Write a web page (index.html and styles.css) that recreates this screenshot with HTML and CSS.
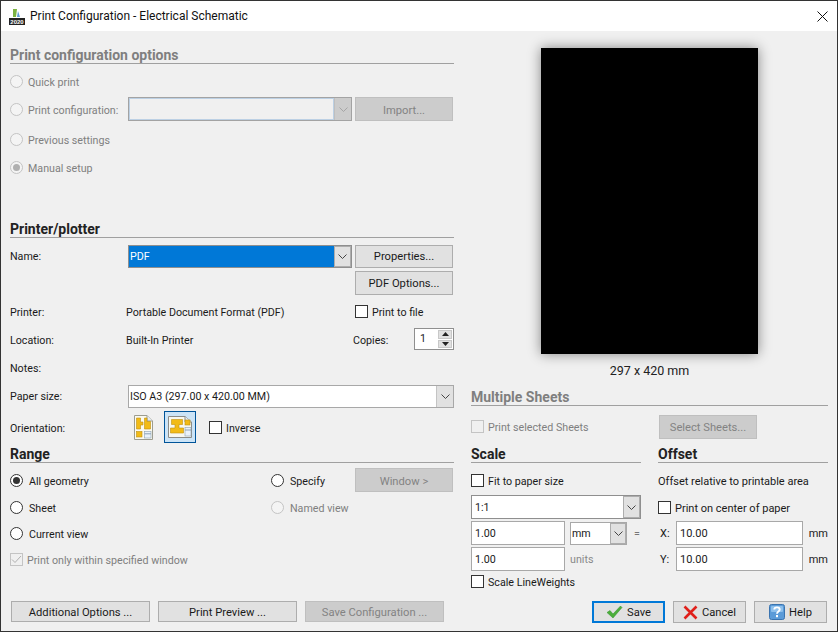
FILE: index.html
```html
<!DOCTYPE html>
<html lang="en">
<head>
<meta charset="utf-8">
<title>Print Configuration - Electrical Schematic</title>
<link rel="stylesheet" href="styles.css">
</head>
<body>
<div class="window">
  <header class="titlebar">
    <svg class="app-icon" width="16" height="18" viewBox="0 0 16 18">
      <path d="M4 1 L8 1 L7 9 L4 9 Z" fill="#7cb342"/>
      <path d="M9 3 L11 9 L8 9 Z" fill="#5b9bd5"/>
      <rect x="0" y="10" width="16" height="7" fill="#222"/>
      <text x="8" y="16" class="app-year" text-anchor="middle">2020</text>
    </svg>
    <span class="title">Print Configuration - Electrical Schematic</span>
    <svg class="close" width="11" height="11" viewBox="0 0 11 11"><path d="M0.5 0.5 L10.5 10.5 M10.5 0.5 L0.5 10.5" stroke="#111" stroke-width="1" fill="none"/></svg>
  </header>

  <main class="main">
    <div class="left">
      <h2 class="heading muted">Print configuration options</h2>
      <div class="opts">
        <div class="line"><span class="radio off"></span><span class="muted-text">Quick print</span></div>
        <div class="line config">
          <span class="radio off"></span><span class="muted-text cfg-label">Print configuration:</span>
          <div class="select dis cfg-select"><span class="val"></span><span class="arrow dis"><svg width="9" height="5" viewBox="0 0 9 5"><path d="M0.5 0.5 L4.5 4.5 L8.5 0.5" fill="none" stroke="#a5a5a5"/></svg></span></div>
          <button class="btn dis import">Import...</button>
        </div>
        <div class="line"><span class="radio off"></span><span class="muted-text">Previous settings</span></div>
        <div class="line"><span class="radio off on"></span><span class="muted-text">Manual setup</span></div>
      </div>

      <h2 class="heading plot">Printer/plotter</h2>
      <div class="printer">
        <span class="lbl">Name:</span>
        <div class="select strong name-select"><span class="val sel">PDF</span><span class="arrow strong"><svg width="9" height="5" viewBox="0 0 9 5"><path d="M0.5 0.5 L4.5 4.5 L8.5 0.5" fill="none" stroke="#444"/></svg></span></div>
        <button class="btn">Properties...</button>

        <button class="btn pdf">PDF Options...</button>

        <span class="lbl">Printer:</span>
        <span class="info">Portable Document Format (PDF)</span>
        <label class="line file"><span class="check"></span>Print to file</label>

        <span class="lbl">Location:</span>
        <span class="info">Built-In Printer</span>
        <div class="copies">
          <span>Copies:</span>
          <div class="spin"><span class="spin-val">1</span>
            <span class="spin-btns">
              <span class="spin-b"><svg width="7" height="4" viewBox="0 0 7 4"><path d="M3.5 0 L7 4 L0 4 Z" fill="#222"/></svg></span>
              <span class="spin-b"><svg width="7" height="4" viewBox="0 0 7 4"><path d="M0 0 L7 0 L3.5 4 Z" fill="#222"/></svg></span>
            </span>
          </div>
        </div>

        <span class="lbl notes">Notes:</span>

        <span class="lbl paper-l">Paper size:</span>
        <div class="select paper"><span class="val">ISO A3 (297.00 x 420.00 MM)</span><span class="arrow"><svg width="9" height="5" viewBox="0 0 9 5"><path d="M0.5 0.5 L4.5 4.5 L8.5 0.5" fill="none" stroke="#444"/></svg></span></div>

        <span class="lbl orient-l">Orientation:</span>
        <div class="orient">
          <span class="orient-btn">
            <svg width="19" height="25" viewBox="0 0 19 25">
              <path d="M0.5 0.5 H13 L18.5 6 V24.5 H0.5 Z" fill="#fbfaf0" stroke="#9c9c90"/>
              <path d="M13 0.5 V6 H18.5" fill="#e4ecf3" stroke="#9c9c90"/>
              <path d="M2.5 3 H6.5 V7 H9 V10 H6.5 V14 H2.5 Z" fill="#f2bb16" stroke="#c09010" stroke-width=".6"/>
              <path d="M10.5 3 H13 V6.5 H16.5 V14 H10.5 Z" fill="#f2bb16" stroke="#c09010" stroke-width=".6"/>
              <rect x="2.5" y="16.5" width="5.5" height="5.5" fill="#f2bb16" stroke="#c09010" stroke-width=".6"/>
              <rect x="10.5" y="16.5" width="6.5" height="6.5" fill="#eaf2fa" stroke="#8aa0b5" stroke-width=".6"/>
              <path d="M10.5 18.8 H17" stroke="#8aa0b5" stroke-width="1"/>
            </svg>
          </span>
          <span class="orient-btn selected">
            <svg width="24" height="22" viewBox="0 0 24 22">
              <path d="M0.5 0.5 H17 L23.5 6 V21.5 H0.5 Z" fill="#f8f8f0" stroke="#8c8c88"/>
              <path d="M17 0.5 V6 H23.5" fill="#e4ecf3" stroke="#8c8c88"/>
              <path d="M3.5 3.5 H14.5 V8.5 H11 V12 H15.5 V17 H2.5 V12 H7 V8.5 H3.5 Z" fill="#f2bb16" stroke="#c09010" stroke-width=".6"/>
              <rect x="17" y="4" width="5" height="5" fill="#f2bb16" stroke="#c09010" stroke-width=".6"/>
              <rect x="17" y="11.5" width="6" height="8.5" fill="#eaf2fa" stroke="#8aa0b5" stroke-width=".6"/>
              <path d="M17 14 H23" stroke="#8aa0b5" stroke-width="1"/>
            </svg>
          </span>
          <label class="line inverse"><span class="check"></span>Inverse</label>
        </div>
      </div>

      <h2 class="heading range-h">Range</h2>
      <div class="range">
        <label class="line"><span class="radio on-dark"></span>All geometry</label>
        <label class="line"><span class="radio"></span>Specify</label>
        <button class="btn dis">Window &gt;</button>

        <label class="line"><span class="radio"></span>Sheet</label>
        <span class="line muted-text"><span class="radio off"></span>Named view</span>
        <span></span>

        <label class="line"><span class="radio"></span>Current view</label>
        <span></span>
        <span></span>

        <span class="line muted-text within"><span class="check off checked"><svg width="11" height="9" viewBox="0 0 11 9"><path d="M1 4.5 L4 7.5 L10 1" fill="none" stroke="#b0b0b0" stroke-width="1"/></svg></span>Print only within specified window</span>
      </div>
    </div>

    <div class="right">
      <div class="preview">
        <div class="paper-sheet"></div>
        <span class="size">297 x 420 mm</span>
      </div>

      <h2 class="heading muted">Multiple Sheets</h2>
      <div class="sheets">
        <span class="line muted-text"><span class="check off"></span>Print selected Sheets</span>
        <button class="btn dis">Select Sheets...</button>
      </div>

      <div class="columns">
        <section class="scale">
          <h2 class="heading">Scale</h2>
          <label class="line fit"><span class="check"></span>Fit to paper size</label>
          <div class="select strong ratio"><span class="val">1:1</span><span class="arrow strong"><svg width="9" height="5" viewBox="0 0 9 5"><path d="M0.5 0.5 L4.5 4.5 L8.5 0.5" fill="none" stroke="#444"/></svg></span></div>
          <div class="scale-row">
            <span class="input num">1.00</span>
            <div class="select unit"><span class="val">mm</span><span class="arrow strong"><svg width="9" height="5" viewBox="0 0 9 5"><path d="M0.5 0.5 L4.5 4.5 L8.5 0.5" fill="none" stroke="#444"/></svg></span></div>
            <span class="eq">=</span>
          </div>
          <div class="scale-row">
            <span class="input num">1.00</span>
            <span class="units">units</span>
          </div>
          <label class="line weights"><span class="check"></span>Scale LineWeights</label>
        </section>
        <section class="offset">
          <h2 class="heading">Offset</h2>
          <div class="line fit">Offset relative to printable area</div>
          <label class="line center"><span class="check"></span>Print on center of paper</label>
          <div class="xy"><span class="xy-l">X:</span><span class="input wide">10.00</span><span class="mm">mm</span></div>
          <div class="xy"><span class="xy-l">Y:</span><span class="input wide">10.00</span><span class="mm">mm</span></div>
        </section>
      </div>
    </div>
  </main>

  <footer class="footer">
    <div class="foot-left">
      <button class="btn wide-btn">Additional Options ...</button>
      <button class="btn wide-btn">Print Preview ...</button>
      <button class="btn dis wide-btn">Save Configuration ...</button>
    </div>
    <div class="foot-right">
      <button class="btn act default">
        <svg width="17" height="14" viewBox="0 0 17 14"><path d="M1 7.5 L4 5.5 L7 9 L14.5 1 L16 2.5 L7 13 Z" fill="#4caf3a" stroke="#2f8f2a" stroke-width=".5"/></svg>Save</button>
      <button class="btn act">
        <svg width="15" height="15" viewBox="0 0 15 15"><path d="M1.5 1.5 L13.5 13.5 M13.5 1.5 L1.5 13.5" stroke="#e0201b" stroke-width="2.6" fill="none"/></svg>Cancel</button>
      <button class="btn act">
        <svg class="help-ic" width="16" height="16" viewBox="0 0 16 16"><rect x=".5" y=".5" width="15" height="15" rx="2" fill="#5b9bd8" stroke="#3a74b0"/><rect x="2" y="2" width="12" height="6" rx="1" fill="#8ec0ec"/><path d="M5.3 5.6 C5.3 2.6 10.7 2.6 10.7 5.6 C10.7 7.6 8 7.6 8 9.8" fill="none" stroke="#fff" stroke-width="1.9"/><rect x="7" y="11" width="2" height="2.2" fill="#fff"/></svg>Help</button>
    </div>
  </footer>
</div>
</body>
</html>
```

FILE: styles.css
```css
* { box-sizing: border-box; }
html, body { margin: 0; padding: 0; }
body {
  width: 838px;
  height: 632px;
  overflow: hidden;
  font-family: Roboto, "Noto Sans", sans-serif;
  font-size: 10.7px;
  color: #1a1a1a;
  background: #f0f0f0;
}
.window {
  width: 838px;
  height: 632px;
  border: 1px solid #333;
  display: flex;
  flex-direction: column;
  background: #f0f0f0;
}
.titlebar {
  height: 30px;
  flex: none;
  background: #fff;
  display: flex;
  align-items: center;
  padding-left: 8px;
}
.app-icon { flex: none; margin-right: 5px; margin-top: 1px; }
.app-year { font: bold 6px "Liberation Sans", sans-serif; fill: #fff; }
.title { font-size: 12px; color: #111; }
.close { margin-left: auto; margin-right: 9px; }

.main { flex: 1; display: flex; min-height: 0; padding: 0 9px; gap: 17px; }
.left { width: 444px; flex: none; padding-top: 16px; }
.right { width: 357px; flex: none; }

.heading {
  margin: 0;
  font-size: 14px;
  font-weight: 700;
  line-height: 17px;
  height: 17px;
  border-bottom: 1px solid #a0a0a0;
  color: #222;
  white-space: nowrap;
}
.heading.muted { color: #7f7f7f; }
.muted-text { color: #7f7f7f; }

.line { display: flex; align-items: center; white-space: nowrap; }

.radio {
  width: 13px; height: 13px;
  border: 1px solid #333;
  border-radius: 50%;
  background: #fff;
  margin-right: 6px;
  margin-bottom: 2px;
  flex: none;
}
.radio.off { border-color: #c4c4c4; background: #f4f4f4; }
.radio.on::after, .radio.on-dark::after {
  content: "";
  width: 7px; height: 7px;
  border-radius: 50%;
  background: #b0b0b0;
  display: block;
  margin: 2px;
}
.radio.on-dark::after { background: #333; }

.check {
  width: 13px; height: 13px;
  border: 1px solid #333;
  background: #fff;
  margin-right: 4px;
  margin-bottom: 2px;
  flex: none;
  display: flex;
  align-items: center;
  justify-content: center;
}
.check.off { border-color: #c4c4c4; background: #f0f0f0; }

.btn {
  font: inherit;
  font-size: 11.2px;
  color: #1a1a1a;
  background: #e1e1e1;
  border: 1px solid #adadad;
  padding: 2px 0 0;
  margin: 0;
  display: flex;
  align-items: center;
  justify-content: center;
}
.btn.dis { background: #ccc; border-color: #bfbfbf; color: #838383; }

.select {
  display: flex;
  background: #fff;
  border: 1px solid #a8a8a8;
  min-width: 0;
}
.select .val {
  flex: 1;
  padding-left: 1px;
  display: flex;
  align-items: center;
  min-width: 0;
}
.arrow {
  width: 17px;
  flex: none;
  background: #e1e1e1;
  display: flex;
  align-items: center;
  justify-content: center;
  border-left: 1px solid #c4c4c4;
}
.arrow.strong { border: 1px solid #adadad; }
.select.strong { border-color: #8f8f8f; }
.select.dis { border-color: #a3a3a3; background: #f0f0f0; }
.select.dis .val { box-shadow: inset 0 0 0 1px #bcd0e4; }
.arrow.dis { background: #ccc; border-left: 1px solid #bfbfbf; }

.opts {
  display: grid;
  grid-template-rows: 28px 28px 32px 24px;
  padding-top: 4px;
  padding-bottom: 41px;
  align-items: center;
}
.opts .radio { margin-right: 5px; }
.config { display: grid; grid-template-columns: 18px 100px 224px 102px; align-items: center; }
.config .radio { margin-right: 0; }
.cfg-select { height: 24px; margin-bottom: 2px; }
.import { height: 24px; width: 98px; justify-self: end; margin: 0 1px 2px 0; }

.printer {
  display: grid;
  grid-template-columns: 118px 227px 99px;
  grid-template-rows: 24px 30px 28px 28px 28px 28px 36px;
  margin-top: 6px;
  align-items: center;
}
.name-select { height: 23px; width: 224px; }
.sel { background: #0078d7; color: #fff; }
.printer > .btn { height: 23px; width: 98px; justify-self: end; margin-right: 1px; padding-top: 0; }
.printer > .pdf { grid-column: 3; height: 24px; }
.info { margin-left: -2px; white-space: nowrap; }
.copies { display: flex; align-items: center; justify-content: space-between; margin-left: -2px; }
.spin {
  width: 40px; height: 22px;
  border: 1px solid #8f8f8f;
  background: #fff;
  display: flex;
  margin-bottom: 2px;
}
.spin-val { flex: 1; padding-left: 5px; line-height: 19px; }
.spin-btns { width: 16px; display: flex; flex-direction: column; padding: 1px; gap: 1px; }
.spin-b { flex: 1; background: #e1e1e1; border: 1px solid #c8c8c8; display: flex; align-items: center; justify-content: center; }
.notes { grid-row: 5; grid-column: 1; }
.paper-l { grid-row: 6; grid-column: 1; }
.paper { grid-row: 6; grid-column: 2 / 4; height: 23px; }
.orient-l { grid-row: 7; grid-column: 1; }
.orient { grid-row: 7; grid-column: 2 / 4; display: flex; align-items: center; margin-left: 6px; }
.orient-btn { display: flex; align-items: center; justify-content: center; margin-bottom: 2px; }
.orient-btn:first-child { width: 19px; margin-right: 11px; }
.orient-btn.selected { width: 32px; height: 32px; background: #cce4f7; border: 1px solid #005499; }
.inverse { margin-left: 13px; }

.range {
  display: grid;
  grid-template-columns: 261px 84px 99px;
  grid-template-rows: 30px 24px 28px 24px;
  margin-top: 3px;
  align-items: center;
}
.range .btn { height: 24px; width: 98px; justify-self: end; margin-right: 1px; margin-bottom: 2px; }
.within { grid-column: 1 / 4; }

.preview { height: 358px; padding-top: 17px; display: flex; flex-direction: column; align-items: center; }
.paper-sheet { width: 217px; height: 306px; background: #000; flex: none; box-shadow: 0 0 12px rgba(0,0,0,.45); }
.size { margin-top: 9px; font-size: 12.5px; line-height: 16px; color: #222; }

.sheets { display: flex; align-items: center; justify-content: space-between; height: 24px; margin-top: 9px; padding-right: 71px; }
.sheets .btn { width: 98px; height: 24px; padding-top: 0; }

.columns { display: grid; grid-template-columns: 170px 170px; gap: 17px; margin-top: 7px; }
.fit { height: 24px; margin-top: 6px; }
.ratio { height: 24px; margin-top: 2px; }
.ratio .val { padding-left: 3px; }
.scale-row { display: flex; align-items: center; height: 24px; margin-top: 2px; }
.input { background: #fff; border: 1px solid #a8a8a8; height: 24px; display: flex; align-items: center; padding-left: 3px; }
.num { width: 94px; }
.unit { width: 57px; height: 23px; margin-left: 5px; }
.unit .arrow { width: 16px; }
.eq { margin-left: 7px; color: #777; }
.units { margin-left: 5px; color: #888; }
.weights { margin-top: 1px; height: 20px; }
.offset { font-size: 11px; }
.center { height: 22px; margin-top: 4px; }
.xy { display: flex; align-items: center; height: 24px; margin-top: 2px; }
.xy-l { width: 18px; padding-left: 2px; flex: none; }
.wide { width: 130px; }
.mm { margin-left: 6px; }

.footer { flex: none; display: flex; justify-content: space-between; padding: 0 10px 8px 10px; }
.foot-left, .foot-right { display: flex; gap: 8px; }
.wide-btn { width: 139px; height: 21px; }
.act { width: 73px; height: 22px; gap: 4px; padding-top: 0; }
.default { border: 2px solid #0078d7; }
```
